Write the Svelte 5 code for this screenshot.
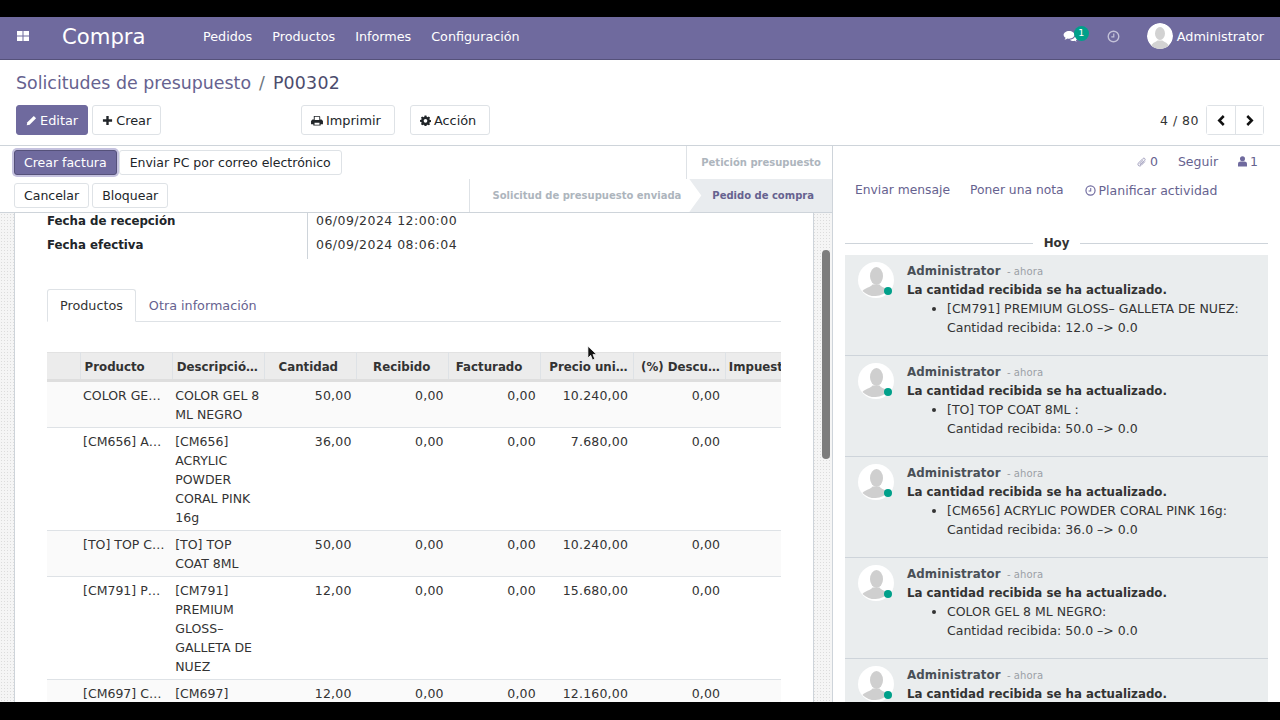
<script>
  const menu = ['Pedidos', 'Productos', 'Informes', 'Configuración'];
  const headers = [
    { label: '' },
    { label: 'Producto' },
    { label: 'Descripció…' },
    { label: 'Cantidad', side: 'right' },
    { label: 'Recibido', side: 'right' },
    { label: 'Facturado', side: 'right' },
    { label: 'Precio uni…', side: 'tight' },
    { label: '(%) Descu…', side: 'tight' },
    { label: 'Impuestos' }
  ];

  const rows = [
    { prod: 'COLOR GE…', desc: ['COLOR GEL 8', 'ML NEGRO'], qty: '50,00', price: '10.240,00' },
    { prod: '[CM656] A…', desc: ['[CM656]', 'ACRYLIC', 'POWDER', 'CORAL PINK', '16g'], qty: '36,00', price: '7.680,00' },
    { prod: '[TO] TOP C…', desc: ['[TO] TOP', 'COAT 8ML'], qty: '50,00', price: '10.240,00' },
    { prod: '[CM791] P…', desc: ['[CM791]', 'PREMIUM', 'GLOSS–', 'GALLETA DE', 'NUEZ'], qty: '12,00', price: '15.680,00' },
    { prod: '[CM697] C…', desc: ['[CM697]'], qty: '12,00', price: '12.160,00' }
  ];

  const messages = [
    { item: '[CM791] PREMIUM GLOSS– GALLETA DE NUEZ:', change: '12.0 –> 0.0' },
    { item: '[TO] TOP COAT 8ML :', change: '50.0 –> 0.0' },
    { item: '[CM656] ACRYLIC POWDER CORAL PINK 16g:', change: '36.0 –> 0.0' },
    { item: 'COLOR GEL 8 ML NEGRO:', change: '50.0 –> 0.0' },
    { item: '[CM697] COLOR GEL:', change: '12.0 –> 0.0' }
  ];
</script>

<div class="screen">
  <div class="letterbox top"></div>

  <nav class="navbar">
    <svg class="apps" viewBox="0 0 12 10" width="12" height="10"><path d="M0 0h5.500v4.400H0zM6.500 0H12v4.400H6.500zM0 5.600h5.500V10H0zM6.500 5.600H12V10H6.500z" fill="#fff"/></svg>
    <span class="brand">Compra</span>
    <div class="menu">
      {#each menu as item}
        <span>{item}</span>
      {/each}
    </div>
    <div class="systray">
      <span class="chat">
        <svg viewBox="0 0 16 14" width="15" height="13"><path d="M6.500 1C3.200 1 .6 2.900.6 5.200c0 1.300.8 2.500 2.100 3.200-.2.8-.7 1.500-1.100 2 1.100-.1 2.200-.7 2.900-1.300.6.1 1.300.2 2 .2 3.300 0 5.900-1.900 5.900-4.100S9.800 1 6.500 1z" fill="#fff"/><path d="M13.300 5.300c.1 2.700-2.800 4.900-6 5.100.9.900 2.300 1.400 3.800 1.400.5 0 1 0 1.400-.2.500.500 1.300.900 2.100 1-.3-.4-.6-.9-.8-1.500 1-.5 1.600-1.400 1.600-2.400 0-1.400-.8-2.600-2.100-3.400z" fill="#fff"/></svg>
        <span class="badge">1</span>
      </span>
      <svg class="clock" viewBox="0 0 14 14" width="13" height="13"><circle cx="7" cy="7" r="5.700" fill="none" stroke="#c3c1d8" stroke-width="1.500"/><path d="M7.300 3.800V7.500H4.600" fill="none" stroke="#c3c1d8" stroke-width="1.300"/></svg>
      <span class="user">
        <svg class="user-pic" viewBox="0 0 26 26" width="26" height="26"><circle cx="13" cy="13" r="13" fill="#fff"/><ellipse cx="13" cy="10.500" rx="5" ry="6.500" fill="#d2d2d2"/><path d="M4 23c1.500-3.500 5-4 6.500-5.500h5C17 19 20.500 19.500 22 23a13 13 0 0 1-18 0z" fill="#d2d2d2"/></svg>
        Administrator
      </span>
    </div>
  </nav>

  <header class="control">
    <div class="breadcrumb"><span class="link">Solicitudes de presupuesto</span><span class="sep">/</span><span class="record">P00302</span></div>
    <div class="buttons">
      <div class="left-actions">
        <button class="btn primary">
          <svg viewBox="0 0 12 12" width="11" height="11"><path d="M8.500 1 11 3.500 4 10.500.8 11.200 1.500 8z" fill="#fff"/></svg>
          Editar
        </button>
        <button class="btn">
          <svg viewBox="0 0 12 12" width="11" height="11"><path d="M4.700 1h2.600v3.700H11v2.600H7.300V11H4.700V7.300H1V4.700h3.700z" fill="#212529"/></svg>
          Crear
        </button>
      </div>
      <div class="mid-actions">
        <button class="btn print">
          <svg viewBox="0 0 13 12" width="12" height="11"><path d="M3 1h6l1 1v3h1.500L13 6.500V10h-2.500v1.500h-8V10H0V6.500L1.500 5H3zm1 1v3.500h5V2.500L8.500 2zM3.800 8.500v2h5.400v-2z" fill="#212529" fill-rule="evenodd"/></svg>
          Imprimir
        </button>
        <button class="btn action">
          <svg viewBox="0 0 12 12" width="11" height="11"><path fill-rule="evenodd" fill="#212529" d="M5 .5h2l.3 1.500 1 .4L9.600 1.600 11 3l-.8 1.300.4 1 1.400.3v2l-1.400.3-.4 1 .8 1.300L9.600 11.300l-1.300-.8-1 .4L7 12.300H5l-.3-1.400-1-.4-1.300.8L1 9.900l.8-1.300-.4-1L0 7.400v-2l1.400-.3.4-1L1 3l1.400-1.400 1.300.8 1-.4zM6 4.400a2 2 0 1 0 0 4 2 2 0 0 0 0-4z"/></svg>
          Acción
        </button>
      </div>
      <div class="pager">
        <span>4 / 80</span>
        <div class="pager-btns">
          <button aria-label="Anterior"><svg viewBox="0 0 10 12" width="9" height="11"><path d="M7.500 1 2.500 6l5 5" fill="none" stroke="#111" stroke-width="2.800"/></svg></button>
          <button aria-label="Siguiente"><svg viewBox="0 0 10 12" width="9" height="11"><path d="M2.500 1l5 5-5 5" fill="none" stroke="#111" stroke-width="2.800"/></svg></button>
        </div>
      </div>
    </div>
  </header>

  <main class="content">
    <section class="form-view">
      <div class="statusbar">
        <div class="status-buttons">
          <div class="btn-row">
            <button class="btn small primary focus">Crear factura</button>
            <button class="btn small">Enviar PC por correo electrónico</button>
          </div>
          <div class="btn-row tight">
            <button class="btn small">Cancelar</button>
            <button class="btn small">Bloquear</button>
          </div>
        </div>
        <div class="states">
          <div class="state-top">Petición presupuesto</div>
          <div class="state-bottom">
            <span class="state sent">Solicitud de presupuesto enviada</span>
            <span class="state current">Pedido de compra</span>
          </div>
        </div>
      </div>

      <div class="sheet-wrap">
        <div class="sheet">
          <div class="fields">
            <div class="field"><span class="label">Fecha de recepción</span><span class="value">06/09/2024 12:00:00</span></div>
            <div class="field"><span class="label">Fecha efectiva</span><span class="value">06/09/2024 08:06:04</span></div>
          </div>

          <div class="tabs">
            <span class="tab active">Productos</span>
            <span class="tab">Otra información</span>
          </div>

          <div class="table-wrap">
            <table>
              <thead>
                <tr>
                  {#each headers as h}
                    <th class:right={h.side === 'right'} class:tight={h.side === 'tight'}>{h.label}</th>
                  {/each}
                </tr>
              </thead>
              <tbody>
                {#each rows as r, i}
                  <tr class:odd={i % 2 === 0}>
                    <td></td>
                    <td class="nowrap">{r.prod}</td>
                    <td>{#each r.desc as line}<div>{line}</div>{/each}</td>
                    <td class="num">{r.qty}</td>
                    <td class="num">0,00</td>
                    <td class="num">0,00</td>
                    <td class="num">{r.price}</td>
                    <td class="num">0,00</td>
                    <td></td>
                  </tr>
                {/each}
              </tbody>
            </table>
          </div>
        </div>
        <div class="scroll-track"><div class="scroll-thumb"></div></div>
      </div>
    </section>

    <aside class="chatter">
      <div class="chatter-top">
        <span class="muted-link">
          <svg viewBox="0 0 12 13" width="10" height="12"><path d="M9.500 6 5 10.500c-1 1-2.500 1-3.300.2S1 8.500 2 7.500l5-5c.7-.7 1.700-.7 2.300-.1s.6 1.600-.1 2.300L4.800 9.100c-.4.400-.9.400-1.200.1s-.3-.8.1-1.200L7.500 4.300" fill="none" stroke="#8d8aaf" stroke-width="1"/></svg>
          0
        </span>
        <span>Seguir</span>
        <span class="muted-link">
          <svg viewBox="0 0 10 12" width="9" height="11"><circle cx="5" cy="3" r="2.800" fill="#6f6a9e"/><path d="M0 11.500V8.500C0 7 1.500 6 3 6h4c1.500 0 3 1 3 2.500v3z" fill="#6f6a9e"/></svg>
          1
        </span>
      </div>
      <div class="composer">
        <span>Enviar mensaje</span>
        <span>Poner una nota</span>
        <span class="plan">
          <svg viewBox="0 0 14 14" width="11" height="11"><circle cx="7" cy="7" r="5.800" fill="none" stroke="#6f6a9e" stroke-width="1.500"/><path d="M7.300 3.800V7.500H4.600" fill="none" stroke="#6f6a9e" stroke-width="1.300"/></svg>
          Planificar actividad
        </span>
      </div>
      <div class="day"><span>Hoy</span></div>
      <div class="thread">
        {#each messages as m}
          <article class="message">
            <div class="avatar">
              <svg viewBox="0 0 36 36" width="36" height="36"><circle cx="18" cy="18" r="18" fill="#fff"/><ellipse cx="18.500" cy="14" rx="6.500" ry="9" fill="#cfcfcf"/><path d="M4.500 29c3-3.500 8-3.500 10-6.500h7c2 3 6 3 9 5.500a18 18 0 0 1-26 1z" fill="#cfcfcf"/></svg>
              <span class="online"></span>
            </div>
            <div class="body">
              <div class="author">Administrator <small>- ahora</small></div>
              <div class="subject">La cantidad recibida se ha actualizado.</div>
              <ul>
                <li>{m.item}<br />Cantidad recibida: {m.change}</li>
              </ul>
            </div>
          </article>
        {/each}
      </div>
    </aside>

    <svg class="cursor" viewBox="0 0 12 18" width="11" height="17"><path d="M1 1v13l3-3 2 5 2.500-1-2-5H10.500z" fill="#111" stroke="#fff" stroke-width=".8"/></svg>
  </main>

  <div class="letterbox bottom"></div>
</div>

<style>
  :global(body) {
    margin: 0;
    background: #000;
  }

  .screen {
    width: 1280px;
    height: 720px;
    display: flex;
    flex-direction: column;
    overflow: hidden;
    font-family: "DejaVu Sans", sans-serif;
    font-size: 12.5px;
    color: #212529;
    background: #fff;
  }

  .letterbox {
    background: #000;
    flex: none;
  }

  .letterbox.top { height: 17px; }
  .letterbox.bottom { height: 18px; }

  .navbar {
    flex: none;
    height: 43px;
    box-sizing: border-box;
    border-bottom: 1px solid #55517a;
    background: #6f6a9e;
    color: #fff;
    display: flex;
    align-items: center;
    padding: 0 16px 4px 17px;
  }

  .brand {
    margin-left: 33px;
    font-size: 21.2px;
    width: 141px;
  }

  .menu {
    display: flex;
    gap: 20px;
    font-size: 12.75px;
  }

  .systray {
    margin-left: auto;
    display: flex;
    align-items: center;
  }

  .chat {
    position: relative;
    display: flex;
    margin-right: 29px;
  }

  .badge {
    position: absolute;
    left: 11px;
    top: -4px;
    width: 15px;
    height: 15px;
    border-radius: 50%;
    background: #00a08a;
    font-size: 9.5px;
    line-height: 13px;
    text-align: center;
  }

  .clock {
    margin-right: 27px;
  }

  .user {
    display: flex;
    align-items: center;
    gap: 4px;
    font-size: 12.8px;
  }

  .user-pic {
    border-radius: 50%;
  }

  .control {
    flex: none;
    height: 86px;
    box-sizing: border-box;
    padding: 0 16px;
    border-bottom: 1px solid #ced4da;
  }

  .breadcrumb {
    height: 45px;
    padding-top: 1px;
    box-sizing: border-box;
    display: flex;
    align-items: center;
    font-size: 17.4px;
    color: #4c4c6d;
    gap: 8px;
  }

  .link {
    color: #66628f;
  }

  .sep {
    color: #6c757d;
  }

  .record {
    letter-spacing: .2px;
  }

  .buttons {
    display: flex;
    align-items: center;
  }

  .left-actions {
    display: flex;
    gap: 4px;
    width: 285px;
  }

  .mid-actions {
    display: flex;
    gap: 15px;
  }

  .btn {
    height: 30px;
    box-sizing: border-box;
    padding: 0 9px;
    display: inline-flex;
    align-items: center;
    gap: 3px;
    border: 1px solid #dee2e6;
    border-radius: 3px;
    background: #fff;
    color: #212529;
    font: inherit;
    font-size: 12.9px;
  }

  .btn.primary {
    background: #6f6a9e;
    border-color: #6f6a9e;
    color: #fff;
  }

  .btn.print {
    padding-right: 13px;
  }

  .btn.action {
    padding-right: 13px;
  }

  .btn.small {
    height: 25px;
    padding: 0 10px;
    font-size: 12.5px;
  }

  .btn.focus {
    box-shadow: 0 0 0 2px #c4c1de;
    border-color: #55517a;
    padding: 0 9px;
  }

  .pager {
    margin-left: auto;
    display: flex;
    align-items: center;
    gap: 7px;
    color: #333;
    letter-spacing: .5px;
  }

  .pager-btns {
    display: flex;
    border: 1px solid #dee2e6;
    border-radius: 3px;
  }

  .pager-btns button {
    width: 28px;
    height: 28px;
    padding: 0;
    border: 0;
    background: #fff;
    display: flex;
    align-items: center;
    justify-content: center;
  }

  .pager-btns button + button {
    border-left: 1px solid #dee2e6;
  }

  .content {
    flex: 1;
    min-height: 0;
    display: flex;
    position: relative;
  }

  .form-view {
    width: 833px;
    flex: none;
    box-sizing: border-box;
    border-right: 1px solid #ced4da;
    display: flex;
    flex-direction: column;
    min-height: 0;
  }

  .statusbar {
    flex: none;
    height: 67px;
    box-sizing: border-box;
    border-bottom: 1px solid #ced4da;
    display: flex;
    justify-content: space-between;
  }

  .status-buttons {
    padding: 4px 0 0 14px;
    display: flex;
    flex-direction: column;
    gap: 8px;
  }

  .btn-row {
    display: flex;
    gap: 4px;
  }

  .btn-row.tight {
    gap: 3px;
  }

  .btn-row.tight .btn {
    padding: 0 9px;
  }

  .btn-row .focus {
    margin-right: -2px;
  }

  .states {
    display: flex;
    flex-direction: column;
    align-items: flex-end;
    font-size: 10px;
    font-weight: 700;
    color: #adb5bd;
  }

  .state-top {
    height: 33px;
    box-sizing: border-box;
    padding: 0 11px 0 14px;
    display: flex;
    align-items: center;
    border-left: 1px solid #dee2e6;
  }

  .state-bottom {
    display: flex;
    height: 33px;
    border-left: 1px solid #dee2e6;
  }

  .state {
    display: flex;
    align-items: center;
  }

  .sent {
    padding: 0 8px 0 22px;
  }

  .current {
    padding: 0 18px 0 23px;
    color: #66628f;
    background: #e9ecef;
    clip-path: polygon(0 0, 100% 0, 100% 100%, 0 100%, 12px 50%);
  }

  .sheet-wrap {
    flex: 1;
    min-height: 0;
    display: flex;
    background-color: #f5f5f5;
    background-image: radial-gradient(#dcdcdc 0.5px, transparent 0.6px);
    background-size: 3px 3px;
    padding-left: 14px;
  }

  .sheet {
    width: 800px;
    flex: none;
    box-sizing: border-box;
    background: #fff;
    border: 1px solid #ced4da;
    border-width: 0 1px;
    padding: 0 32px;
    overflow: hidden;
  }

  .fields {
    margin-top: -4px;
  }

  .field {
    display: flex;
    height: 24px;
    line-height: 24px;
  }

  .field:last-child {
    height: 26px;
  }

  .label {
    width: 261px;
    box-sizing: border-box;
    font-size: 11.8px;
    font-weight: 700;
    border-right: 1px solid #ced4da;
  }

  .value {
    padding-left: 8px;
    color: #333;
    letter-spacing: .47px;
  }

  .tabs {
    margin-top: 30px;
    display: flex;
    height: 33px;
    box-sizing: border-box;
    border-bottom: 1px solid #dee2e6;
  }

  .tab {
    padding: 0 13px;
    height: 33px;
    box-sizing: border-box;
    display: flex;
    align-items: center;
    color: #66628f;
    font-size: 12.75px;
  }

  .tab.active {
    padding: 0 12px;
    color: #333;
    background: #fff;
    border: 1px solid #dee2e6;
    border-bottom-color: #fff;
    border-radius: 3px 3px 0 0;
  }

  .table-wrap {
    margin-top: 30px;
    width: 734px;
    overflow: hidden;
  }

  table {
    table-layout: fixed;
    width: 771px;
    border-collapse: collapse;
  }

  th {
    width: 92px;
    height: 28px;
    padding: 2px 4px 0;
    box-sizing: border-box;
    background: #ececec;
    border-right: 1px solid #dee2e6;
    border-top: 1px solid #e2e2e2;
    border-bottom: 3px solid #dedede;
    text-align: left;
    font-size: 11.8px;
    font-weight: 700;
    white-space: nowrap;
    color: #333;
    overflow: hidden;
  }

  th:first-child { width: 33px; }

  th:last-child { padding-left: 3px; }

  th.right {
    text-align: right;
    padding-right: 18px;
  }

  th.tight {
    text-align: right;
    padding-right: 5px;
  }

  td {
    padding: 4px 5px 3px 3px;
    line-height: 19px;
    vertical-align: top;
    border-bottom: 1px solid #dee2e6;
    color: #333;
    overflow: hidden;
  }

  tr.odd td {
    background: #fafafa;
  }

  .nowrap {
    white-space: nowrap;
  }

  .num {
    text-align: right;
    letter-spacing: .2px;
  }

  .scroll-track {
    flex: 1;
    position: relative;
  }

  .scroll-thumb {
    position: absolute;
    top: 37px;
    left: 8px;
    width: 8px;
    height: 209px;
    border-radius: 4px;
    background: #7d7d7d;
  }

  .chatter {
    flex: 1;
    min-width: 0;
    padding: 0 12px;
    overflow: hidden;
    color: #66628f;
  }

  .chatter-top {
    height: 31px;
    padding-right: 10px;
    display: flex;
    justify-content: flex-end;
    align-items: center;
    gap: 20px;
    color: #66628f;
  }

  .muted-link {
    display: flex;
    align-items: center;
    gap: 3px;
  }

  .composer {
    height: 26px;
    display: flex;
    align-items: center;
    gap: 20px;
    padding-left: 10px;
    font-size: 12.3px;
  }

  .plan {
    display: flex;
    align-items: center;
    gap: 3px;
    font-size: 12.5px;
    margin-left: 1px;
  }

  .day {
    margin-top: 33px;
    height: 14px;
    display: flex;
    align-items: center;
    gap: 11px;
    font-weight: 700;
    font-size: 11.8px;
    color: #333;
  }

  .day::before,
  .day::after {
    content: "";
    flex: 1;
    height: 1px;
    background: #ced4da;
  }

  .thread {
    margin-top: 5px;
  }

  .message {
    height: 101px;
    box-sizing: border-box;
    display: flex;
    gap: 13px;
    padding: 7px 13px 0;
    background: #eaedee;
    border-bottom: 1px solid #ced4da;
    color: #333;
    line-height: 19px;
  }

  .avatar {
    position: relative;
    width: 36px;
    height: 36px;
    flex: none;
  }

  .online {
    position: absolute;
    right: 2px;
    bottom: 3px;
    width: 8px;
    height: 8px;
    border-radius: 50%;
    background: #00a08a;
  }

  .author {
    font-size: 11.8px;
    font-weight: 700;
    letter-spacing: .1px;
    color: #495057;
  }

  .author small {
    font-weight: 400;
    font-size: 10px;
    color: #9aa0a6;
    margin-left: 2px;
  }

  .subject {
    font-size: 11.8px;
    font-weight: 700;
  }

  ul {
    margin: -1px 0 0;
    padding-left: 40px;
  }

  .cursor {
    position: absolute;
    left: 587px;
    top: 199px;
  }
</style>
